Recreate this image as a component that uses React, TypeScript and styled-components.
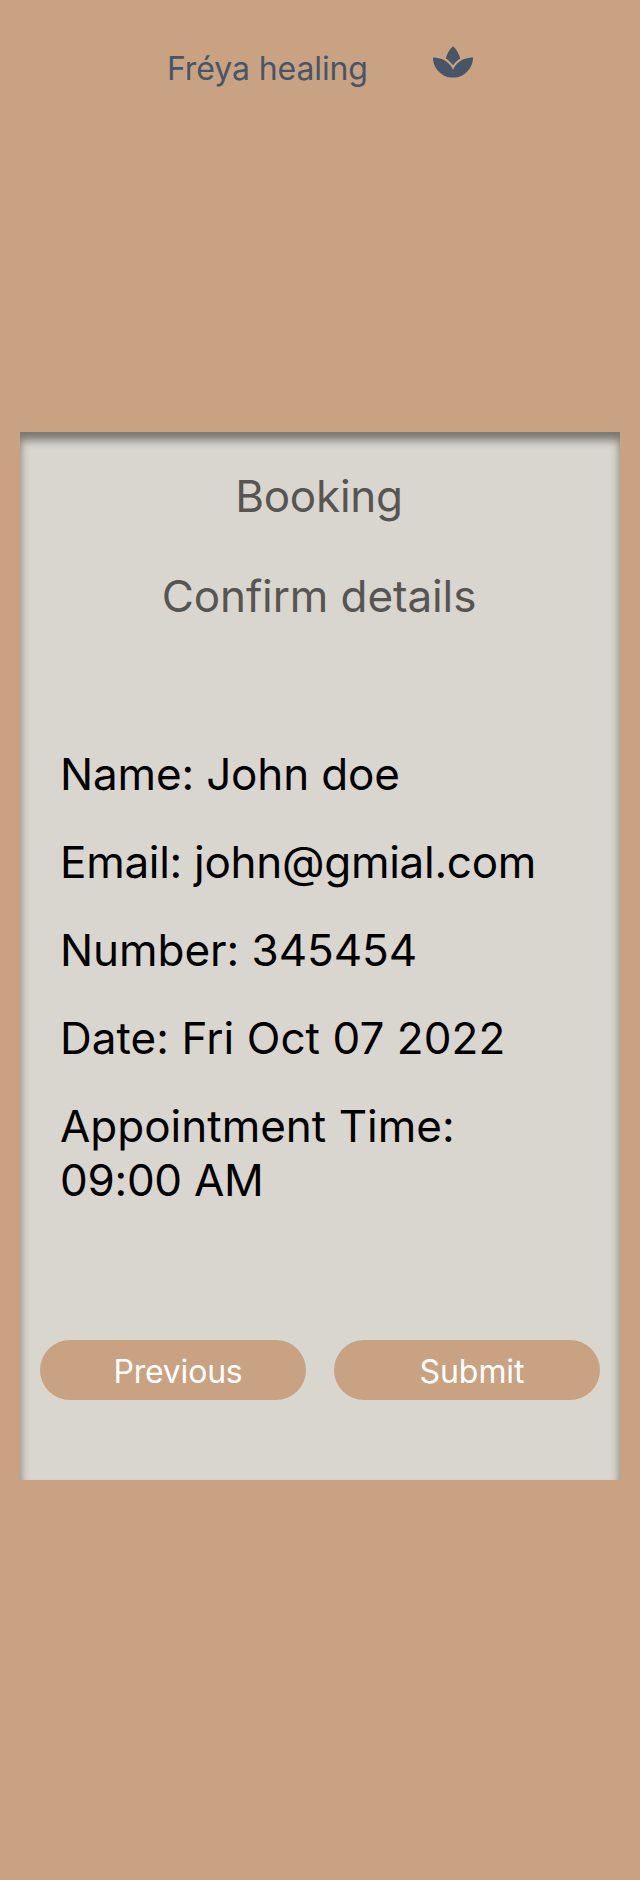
import React from 'react';
import styled, { createGlobalStyle } from 'styled-components';
import { FaSpa } from 'react-icons/fa';

const GlobalStyle = createGlobalStyle`
  * { box-sizing: border-box; }
  body { margin: 0; background: #c9a282; font-family: Inter, sans-serif; }
`;
const Page = styled.div`
  min-height: 1880px;
  padding: 0 20px;
`;
const Header = styled.header`
  height: 432px;
  padding: 40px 0 0 147px;
  display: flex;
  align-items: flex-start;
  color: #475569;
`;
const Brand = styled.span`
  width: 266px;
  font-size: 32px;
  line-height: 57px;
  letter-spacing: -0.1px;
`;
const LotusIcon = styled(FaSpa)`
  width: 40px;
  height: 40px;
  margin-top: 2px;
`;
const Card = styled.main`
  height: 1048px;
  padding: 32px 20px 0;
  background: #d9d6cf;
  box-shadow: inset 0 8px 10px rgba(0, 0, 0, 0.46);
`;
const Title = styled.h1<{ $tracking: number }>`
  margin: 0 0 36px;
  padding-right: 2px;
  font-size: 44px;
  line-height: 64px;
  font-weight: 400;
  letter-spacing: ${(p) => p.$tracking}px;
  text-align: center;
  color: #565552;
`;
const Details = styled.div`
  margin: 119px 20px 0;
  display: grid;
  gap: 34px;
`;
const Detail = styled.p<{ $tracking: number }>`
  margin: 0;
  font-size: 44px;
  line-height: 54px;
  letter-spacing: ${(p) => p.$tracking}px;
  color: #000;
`;
const Time = styled.span`
  letter-spacing: -0.28px;
  white-space: nowrap;
`;
const Actions = styled.div`
  display: flex;
  gap: 28px;
  margin-top: 133px;
`;
const Button = styled.button<{ $tracking: number }>`
  flex: 1;
  height: 60px;
  padding: 3px 0 0 10px;
  border: 0;
  border-radius: 30px;
  background: #c9a282;
  color: #fff;
  font: 400 32px/57px Inter, sans-serif;
  letter-spacing: ${(p) => p.$tracking}px;
`;

const details = [
  { label: 'Name', value: 'John doe', tracking: -0.16 },
  { label: 'Email', value: 'john@gmial.com', tracking: -0.28 },
  { label: 'Number', value: '345454', tracking: -0.05 },
  { label: 'Date', value: 'Fri Oct 07 2022', tracking: 0.06 },
];

export default function App() {
  return (
    <Page>
      <GlobalStyle />
      <Header>
        <Brand>Fréya healing</Brand>
        <LotusIcon />
      </Header>
      <Card>
        <Title $tracking={-0.23}>Booking</Title>
        <Title as="h2" $tracking={-0.1}>Confirm details</Title>
        <Details>
          {details.map((d) => (
            <Detail key={d.label} $tracking={d.tracking}>{`${d.label}: ${d.value}`}</Detail>
          ))}
          <Detail $tracking={0}>
            Appointment Time: <Time>09:00 AM</Time>
          </Detail>
        </Details>
        <Actions>
          <Button $tracking={-0.2}>Previous</Button>
          <Button $tracking={-0.08}>Submit</Button>
        </Actions>
      </Card>
    </Page>
  );
}
